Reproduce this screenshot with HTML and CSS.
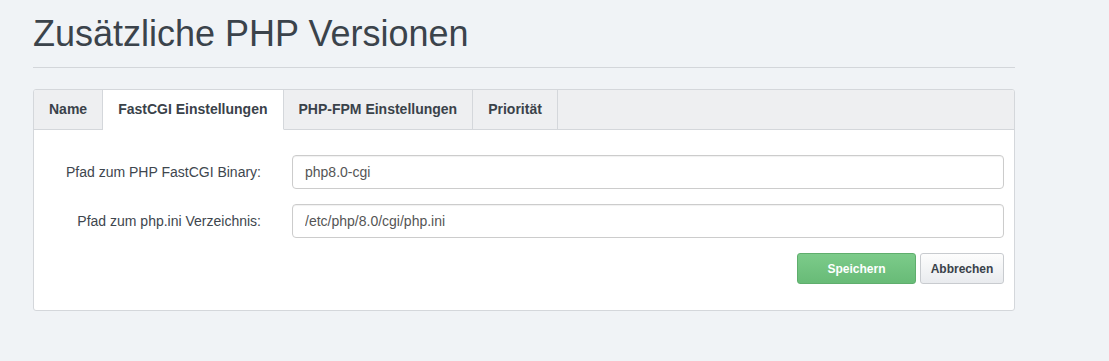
FILE: index.html
```html
<!DOCTYPE html>
<html lang="de">
<head>
<meta charset="utf-8">
<title>Zusätzliche PHP Versionen</title>
<link rel="stylesheet" href="styles.css">
</head>
<body>
<div class="page">
  <h1 class="title">Zusätzliche PHP Versionen</h1>
  <hr class="rule">
  <div class="panel">
    <ul class="tabs">
      <li class="tab">Name</li>
      <li class="tab active">FastCGI Einstellungen</li>
      <li class="tab">PHP-FPM Einstellungen</li>
      <li class="tab">Priorität</li>
      <li class="tab-fill"></li>
    </ul>
    <form class="form">
      <label class="label" for="bin">Pfad zum PHP FastCGI Binary:</label>
      <input class="input" id="bin" type="text" value="php8.0-cgi">
      <label class="label" for="ini">Pfad zum php.ini Verzeichnis:</label>
      <input class="input" id="ini" type="text" value="/etc/php/8.0/cgi/php.ini">
      <div class="actions">
        <button type="button" class="btn btn-save">Speichern</button>
        <button type="button" class="btn btn-cancel">Abbrechen</button>
      </div>
    </form>
  </div>
</div>
</body>
</html>
```

FILE: styles.css
```css
html, body {
  margin: 0;
  padding: 0;
  background: #f0f3f6;
  font-family: "Liberation Sans", Arial, sans-serif;
  color: #3a424a;
}

.page {
  width: 982px;
  padding: 12px 0 0 33px;
}

.title {
  margin: 0;
  font-size: 36px;
  font-weight: normal;
  line-height: 44px;
  color: #3b434b;
}

.rule {
  margin: 11px 0 21px;
  border: 0;
  border-top: 1px solid #d3d6da;
  height: 0;
}

.panel {
  background: #fff;
  border: 1px solid #d4d7db;
  border-radius: 3px;
  overflow: hidden;
}

.tabs {
  display: flex;
  margin: 0;
  padding: 0;
  list-style: none;
  background: #eeeff1;
  height: 40px;
}

.tab {
  padding: 0 15px;
  line-height: 39px;
  font-size: 14px;
  font-weight: bold;
  color: #3a424a;
  border-right: 1px solid #d4d7db;
  border-bottom: 1px solid #d4d7db;
}

.tab.active {
  background: #fff;
  border-bottom-color: #fff;
}

.tab-fill {
  flex: 1;
  border-bottom: 1px solid #d4d7db;
}

.form {
  display: grid;
  grid-template-columns: 227px 1fr;
  column-gap: 31px;
  row-gap: 15px;
  align-items: center;
  padding: 25px 10px 26px 0;
}

.label {
  text-align: right;
  font-size: 14px;
  color: #3e464e;
}

.input {
  box-sizing: border-box;
  height: 34px;
  padding: 0 12px;
  border: 1px solid #ccc;
  border-radius: 4px;
  font-family: "Liberation Sans", Arial, sans-serif;
  font-size: 14px;
  color: #555;
  background: #fff;
  box-shadow: inset 0 1px 1px rgba(0,0,0,0.06);
  width: 100%;
}

.actions {
  grid-column: 2;
  display: flex;
  justify-content: flex-end;
  gap: 4px;
}

.btn {
  box-sizing: border-box;
  height: 31px;
  border-radius: 3px;
  font-family: "Liberation Sans", Arial, sans-serif;
  font-size: 12px;
  font-weight: bold;
  padding: 0;
}

.btn-save {
  width: 119px;
  color: #fff;
  background: linear-gradient(#7ccb8a, #68bb77);
  border: 1px solid #5fae6d;
}

.btn-cancel {
  width: 84px;
  color: #3a424a;
  background: linear-gradient(#fdfdfd, #e9ebee);
  border: 1px solid #c8cbcf;
}
```
